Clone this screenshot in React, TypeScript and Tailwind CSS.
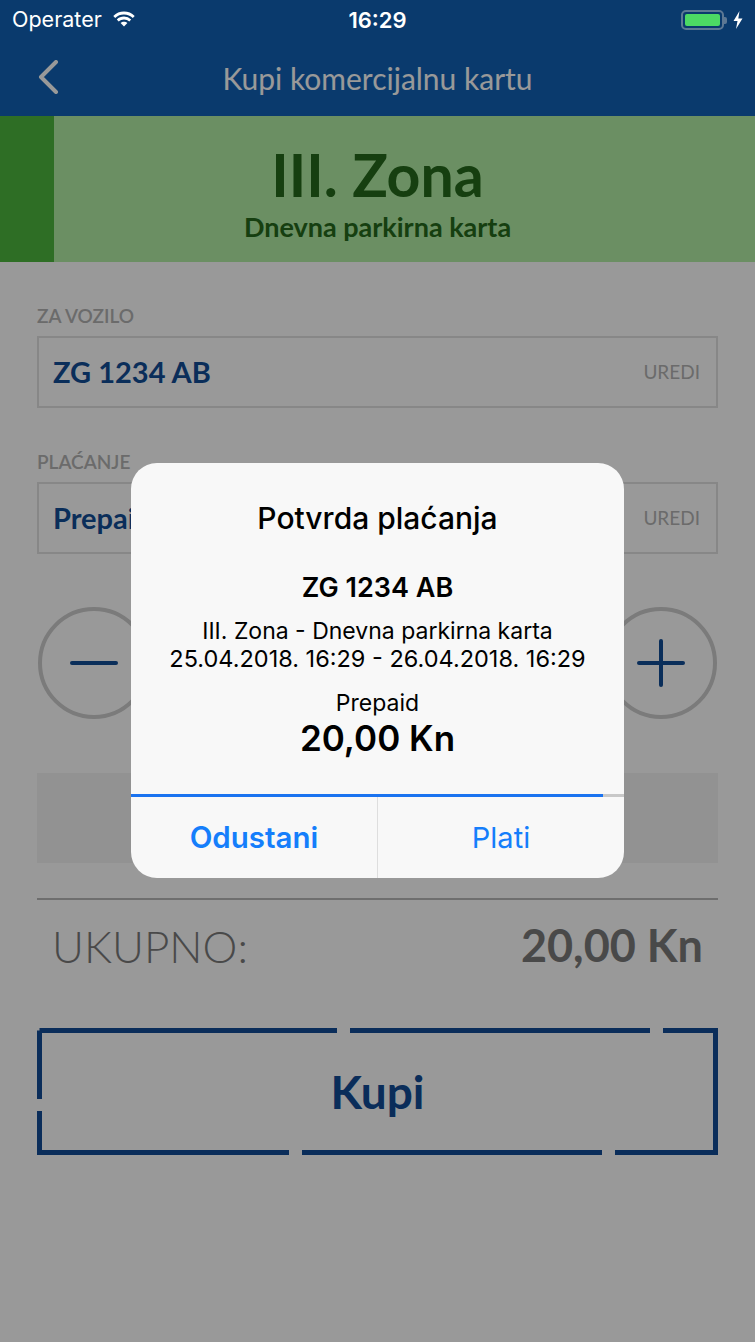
import { ChevronLeft } from 'lucide-react';

const appFont = { fontFamily: 'Lato, "Open Sans", sans-serif' };
const iosFont = { fontFamily: 'Inter, "Noto Sans", sans-serif' };

function StatusBar() {
  return (
    <div className="relative z-20 h-[40px] flex items-center justify-between px-[12px] text-white" style={iosFont}>
      <div className="flex items-center gap-[9px] w-[200px]">
        <span className="text-[21.5px] leading-none">Operater</span>
        <svg width="26" height="20" viewBox="0 0 26 20" fill="white">
          <path d="M13 4.5c3.4 0 6.5 1.3 8.8 3.4l1.9-2A15.5 15.5 0 0 0 13 1.6 15.5 15.5 0 0 0 2.3 5.9l1.9 2A12.7 12.7 0 0 1 13 4.5z" />
          <path d="M13 9.4c2 0 3.9.8 5.3 2l1.9-2A10.6 10.6 0 0 0 13 6.6c-2.8 0-5.3 1-7.2 2.8l1.9 2c1.4-1.2 3.3-2 5.3-2z" />
          <path d="M13 11.7c-1.300 0-2.5.5-3.4 1.3L13 16.6l3.4-3.6c-.9-.8-2.1-1.3-3.4-1.3z" />
        </svg>
      </div>
      <span className="text-[22px] font-semibold leading-none">16:29</span>
      <div className="flex items-center justify-end gap-[6px] w-[200px]">
        <div className="flex items-center">
          <div className="w-[43px] h-[20px] rounded-[5px] border-2 border-[#5d7894] p-[2px]">
            <div className="w-full h-full rounded-[2px] bg-[#4cd964]" />
          </div>
          <div className="w-[3px] h-[7px] rounded-r-[2px] bg-[#5d7894]" />
        </div>
        <svg width="10" height="18" viewBox="0 0 10 18" fill="white">
          <path d="M6.5 0 0.5 10h4l-1.5 8 6.5-10.5h-4.2z" />
        </svg>
      </div>
    </div>
  );
}

function InputBox({ value }: { value: string }) {
  return (
    <div className="h-[72px] border-2 border-[#e2e2e2] flex items-center justify-between pl-[14px] pr-[16px]">
      <span className="text-[29px] font-bold text-[#124d96]">{value}</span>
      <span className="text-[19px] text-[#b2b2b2]">UREDI</span>
    </div>
  );
}

function RoundButton({ plus }: { plus?: boolean }) {
  return (
    <div className="w-[112px] h-[112px] rounded-full border-[4px] border-[#cdcdcd] flex items-center justify-center">
      <svg width="48" height="48" viewBox="0 0 48 48" stroke="#124d96" strokeWidth="4" strokeLinecap="round">
        <path d="M2 24h44" />
        {plus && <path d="M24 2v44" />}
      </svg>
    </div>
  );
}

function DashedBorder() {
  return (
    <svg className="absolute inset-0" width="681" height="127" viewBox="0 0 681 127" fill="none" stroke="#114b96" strokeWidth="5">
      <path d="M2.5 2.5H300" />
      <path d="M313 2.5H613" />
      <path d="M626 2.5H678.5V124.5H578" />
      <path d="M565 124.5H265" />
      <path d="M252 124.5H2.5V83" />
      <path d="M2.5 71V2.5" />
    </svg>
  );
}

export default function App() {
  return (
    <div className="relative w-[755px] h-[1342px] overflow-hidden bg-white" style={appFont}>
      <div className="bg-[#1162b6] h-[116px]">
        <StatusBar />
        <div className="relative h-[76px] flex items-center justify-center">
          <svg className="absolute left-[36px] top-[20px]" width="24" height="34" viewBox="0 0 24 34" fill="none" stroke="white" strokeWidth="4" strokeLinecap="round" strokeLinejoin="round">
            <path d="M20 2 5 17l15 15" />
          </svg>
          <span className="text-[30px] text-white">Kupi komercijalnu kartu</span>
        </div>
      </div>

      <div className="flex h-[146px] bg-[#b2eea5]">
        <div className="w-[54px] bg-[#4eb73f]" />
        <div className="flex-1 pr-[54px] flex flex-col items-center pt-[24px] text-[#25691b]">
          <span className="text-[59px] font-bold leading-[70px]">III. Zona</span>
          <span className="text-[27px] font-bold leading-[30px] mt-[2px]">Dnevna parkirna karta</span>
        </div>
      </div>

      <div className="px-[37px]">
        <div className="pt-[42px] pb-[8px] text-[19px] font-semibold text-[#b2b2b2] leading-[24px]">ZA VOZILO</div>
        <InputBox value="ZG 1234 AB" />
        <div className="pt-[42px] pb-[8px] text-[19px] font-semibold text-[#b2b2b2] leading-[24px]">PLAĆANJE</div>
        <InputBox value="Prepaid" />

        <div className="mt-[53px] flex justify-between px-[1px]">
          <RoundButton />
          <RoundButton plus />
        </div>

        <div className="mt-[54px] h-[90px] bg-[#f3f3f3]" />

        <div className="mt-[35px] border-t-2 border-[#b7b7b7]" />

        <div className="flex items-center justify-between px-[15px] pt-[12px] h-[80px]">
          <span className="text-[44px] font-light text-[#7b7b7b]">UKUPNO:</span>
          <span className="text-[45px] font-bold text-[#7b7b7b]">20,00 Kn</span>
        </div>

        <div className="relative mt-[48px] h-[127px] flex items-center justify-center">
          <DashedBorder />
          <span className="text-[46px] font-bold text-[#114b96]">Kupi</span>
        </div>
      </div>

      <div className="absolute inset-0 z-10 bg-black/40" />

      <div className="absolute z-30 left-[131px] top-[463px] w-[493px] h-[415px] rounded-[26px] bg-[#f8f8f8] overflow-hidden flex flex-col text-black" style={iosFont}>
        <div className="flex-1 flex flex-col items-center">
          <span className="mt-[37px] text-[30px] font-medium leading-[36px]">Potvrda plaćanja</span>
          <span className="mt-[36px] text-[27px] font-semibold leading-[32px]">ZG 1234 AB</span>
          <span className="mt-[13px] text-[23px] leading-[28px]">III. Zona - Dnevna parkirna karta</span>
          <span className="text-[23.5px] leading-[28px]">25.04.2018. 16:29 - 26.04.2018. 16:29</span>
          <span className="mt-[16px] text-[23px] leading-[28px]">Prepaid</span>
          <span className="text-[35px] font-semibold leading-[42px]">20,00 Kn</span>
        </div>
        <div className="flex h-[3px] bg-[#c8c8c8]">
          <div className="w-[472px] bg-[#1a73f0]" />
        </div>
        <div className="flex h-[81px]">
          <div className="flex-1 flex items-center justify-center text-[29.5px] font-semibold text-[#157efb]">Odustani</div>
          <div className="w-px bg-[#dedede]" />
          <div className="flex-1 flex items-center justify-center text-[29px] text-[#157efb]">Plati</div>
        </div>
      </div>
    </div>
  );
}
